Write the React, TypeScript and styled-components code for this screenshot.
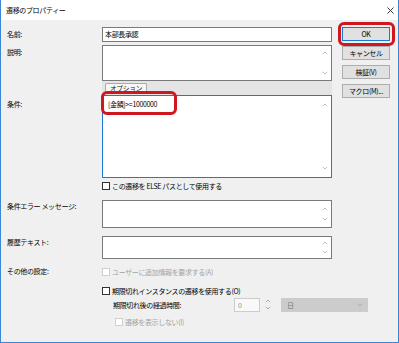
import styled, { createGlobalStyle } from "styled-components";

const GlobalStyle = createGlobalStyle`
  html, body {
    margin: 0;
    padding: 0;
    background: #ffffff;
  }
  body {
    font-family: "Noto Sans CJK JP", "Noto Sans", sans-serif;
  }
`;

function Chevron({ up, color = "#b0b0b0" }: { up?: boolean; color?: string }) {
  return (
    <svg width="6" height="4" viewBox="0 0 6 4">
      <path
        d={up ? "M0.8 3.2 L3 1 L5.2 3.2" : "M0.8 0.8 L3 3 L5.2 0.8"}
        fill="none"
        stroke={color}
        strokeWidth="0.8"
      />
    </svg>
  );
}

function CloseIcon() {
  return (
    <svg width="7" height="7" viewBox="0 0 7 7">
      <path d="M0.5 0.5 L6.5 6.5 M6.5 0.5 L0.5 6.5" stroke="#222" strokeWidth="0.9" />
    </svg>
  );
}

function App() {
  return (
    <>
      <GlobalStyle />
      <Window>
        <TitleBar>
          <span>遷移のプロパティー</span>
          <CloseIcon />
        </TitleBar>

        <Content>
          <Form>
            <Row $top={0}>
              <Label $pad={1}>名前:</Label>
              <TextBox>本部長承認</TextBox>
            </Row>

            <Row $top={3}>
              <Label $pad={1}>説明:</Label>
              <MultiBox $h={36}>
                <BoxText />
                <ScrollStrip>
                  <Chevron up />
                  <Chevron />
                </ScrollStrip>
              </MultiBox>
            </Row>

            <Row $top={0}>
              <Label $pad={0} />
              <Band>
                <Tab>オプション</Tab>
              </Band>
            </Row>

            <Row $top={0}>
              <Label $pad={3}>条件:</Label>
              <MultiBox $h={83} $focused>
                <BoxText $left={5}>[金額]&gt;=1000000</BoxText>
                <ScrollStrip $pad={7}>
                  <Chevron up />
                  <Chevron />
                </ScrollStrip>
              </MultiBox>
            </Row>

            <Row $top={2}>
              <Label $pad={0} />
              <CheckRow $h={12}>
                <CheckBox />
                <span>この遷移を ELSE パスとして使用する</span>
              </CheckRow>
            </Row>

            <Row $top={8}>
              <Label $pad={0}>条件エラー メッセージ:</Label>
              <MultiBox $h={28}>
                <BoxText />
                <ScrollStrip $pad={6}>
                  <Chevron up />
                  <Chevron />
                </ScrollStrip>
              </MultiBox>
            </Row>

            <Row $top={8}>
              <Label $pad={0}>履歴テキスト:</Label>
              <MultiBox $h={23}>
                <BoxText />
                <ScrollStrip $pad={4}>
                  <Chevron up />
                  <Chevron />
                </ScrollStrip>
              </MultiBox>
            </Row>

            <Row $top={6}>
              <Label $pad={0}>その他の設定:</Label>
              <Options>
                <CheckRow $h={13} $disabled>
                  <CheckBox $disabled />
                  <span>ユーザーに追加情報を要求する(A)</span>
                </CheckRow>
                <CheckRow $h={13} $top={6}>
                  <CheckBox />
                  <span>期限切れインスタンスの遷移を使用する(O)</span>
                </CheckRow>
                <SubRow>
                  <SubLabel>期限切れ後の経過時間:</SubLabel>
                  <SpinInput>0</SpinInput>
                  <SpinArrows>
                    <Chevron up color="#9a9a9a" />
                    <Chevron color="#9a9a9a" />
                  </SpinArrows>
                  <Select>
                    <span>日</span>
                    <Chevron color="#a0a0a0" />
                  </Select>
                </SubRow>
                <CheckRow $h={12} $top={4} $indent={13} $disabled>
                  <CheckBox $disabled />
                  <span>遷移を表示しない(I)</span>
                </CheckRow>
              </Options>
            </Row>
          </Form>

          <ButtonCol>
            <Button $default>OK</Button>
            <Button>キャンセル</Button>
            <Button>検証(V)</Button>
            <Button>マクロ(M)...</Button>
          </ButtonCol>
        </Content>

        <Highlight style={{ left: 337, top: 22, width: 57, height: 24 }} />
        <Highlight style={{ left: 100, top: 91, width: 76, height: 24 }} />
      </Window>
    </>
  );
}

const Window = styled.div`
  position: relative;
  width: 399px;
  height: 343px;
  box-sizing: border-box;
  border: 1px solid #3c86d6;
  border-top: none;
  display: flex;
  flex-direction: column;
  font-family: "Noto Sans CJK JP", "Noto Sans", sans-serif;
  font-size: 7px;
  letter-spacing: -0.35px;
  color: #000;
  overflow: hidden;
`;

const TitleBar = styled.div`
  height: 20px;
  flex-shrink: 0;
  display: flex;
  align-items: center;
  justify-content: space-between;
  padding: 0 4px 0 5px;
  background: #ffffff;
  font-size: 7px;
`;

const Content = styled.div`
  flex: 1;
  display: flex;
  align-items: flex-start;
  padding: 7px 0 0 6px;
  background: #f0f0f0;
`;

const Form = styled.div`
  width: 325px;
  flex-shrink: 0;
  display: flex;
  flex-direction: column;
`;

const Row = styled.div<{ $top: number }>`
  display: flex;
  margin-top: ${(p) => p.$top}px;
`;

const Label = styled.div<{ $pad: number }>`
  width: 95px;
  flex-shrink: 0;
  line-height: 12px;
  padding-top: ${(p) => p.$pad}px;
  white-space: nowrap;
`;

const TextBox = styled.div`
  width: 230px;
  height: 15px;
  box-sizing: border-box;
  border: 1px solid #7a7a7a;
  background: #ffffff;
  padding: 0 2px;
  line-height: 13px;
`;

const MultiBox = styled.div<{ $h: number; $focused?: boolean }>`
  width: 230px;
  height: ${(p) => p.$h}px;
  box-sizing: border-box;
  border: 1px solid ${(p) => (p.$focused ? "#1a7ad4" : "#7a7a7a")};
  background: #ffffff;
  display: flex;
`;

const BoxText = styled.div<{ $left?: number }>`
  flex: 1;
  padding: 2px 3px 2px ${(p) => p.$left ?? 3}px;
  line-height: 12px;
`;

const ScrollStrip = styled.div<{ $pad?: number }>`
  width: 12px;
  display: flex;
  flex-direction: column;
  justify-content: space-between;
  align-items: center;
  padding: ${(p) => p.$pad ?? 5}px 0;
  box-sizing: border-box;
`;

const Band = styled.div`
  width: 230px;
  height: 14px;
  box-sizing: border-box;
  background: #e4e4e4;
  padding: 2px 0 0 3px;
`;

const Tab = styled.div`
  width: 42px;
  height: 10px;
  box-sizing: border-box;
  border: 1px solid #a9a9a9;
  border-bottom: none;
  border-radius: 2px 2px 0 0;
  background: #f7f7f7;
  font-size: 6.8px;
  line-height: 9px;
  text-align: center;
  color: #222;
`;

const CheckRow = styled.div<{ $h: number; $top?: number; $indent?: number; $disabled?: boolean }>`
  display: flex;
  align-items: center;
  gap: 2px;
  height: ${(p) => p.$h}px;
  margin-top: ${(p) => p.$top ?? 0}px;
  padding-left: ${(p) => p.$indent ?? 0}px;
  color: ${(p) => (p.$disabled ? "#a3a3a3" : "#000")};
  white-space: nowrap;
`;

const CheckBox = styled.span<{ $disabled?: boolean }>`
  width: 8px;
  height: 8px;
  box-sizing: border-box;
  flex-shrink: 0;
  border: 1px solid ${(p) => (p.$disabled ? "#cfcfcf" : "#333")};
  background: #ffffff;
`;

const Options = styled.div`
  width: 230px;
  flex-shrink: 0;
  display: flex;
  flex-direction: column;
  align-items: flex-start;
`;

const SubRow = styled.div`
  display: flex;
  align-items: center;
  flex-shrink: 0;
  height: 15px;
  padding-left: 11px;
`;

const SubLabel = styled.span`
  width: 121px;
  flex-shrink: 0;
  white-space: nowrap;
`;

const SpinInput = styled.div`
  width: 26px;
  height: 14px;
  flex-shrink: 0;
  box-sizing: border-box;
  border: 1px solid #cccccc;
  background: #f9f9f9;
  color: #8c8c8c;
  padding-left: 3px;
  line-height: 12px;
`;

const SpinArrows = styled.div`
  width: 7px;
  height: 14px;
  flex-shrink: 0;
  margin-left: 4px;
  display: flex;
  flex-direction: column;
  justify-content: space-around;
  align-items: center;
`;

const Select = styled.div`
  width: 87px;
  height: 14px;
  flex-shrink: 0;
  box-sizing: border-box;
  margin-left: 10px;
  background: #cccccc;
  color: #7a7a7a;
  display: flex;
  align-items: center;
  justify-content: space-between;
  padding: 0 5px 0 6px;
`;

const ButtonCol = styled.div`
  display: flex;
  flex-direction: column;
  gap: 5px;
  margin-left: 10px;
`;

const Button = styled.div<{ $default?: boolean }>`
  width: 48px;
  height: 14px;
  box-sizing: border-box;
  border: 1px solid ${(p) => (p.$default ? "#1a7ad4" : "#adadad")};
  background: #e1e1e1;
  display: flex;
  align-items: center;
  justify-content: center;
  white-space: nowrap;
`;

const Highlight = styled.div`
  position: absolute;
  box-sizing: border-box;
  border: 3px solid #d0161e;
  border-radius: 6px;
  pointer-events: none;
`;

export default App;
